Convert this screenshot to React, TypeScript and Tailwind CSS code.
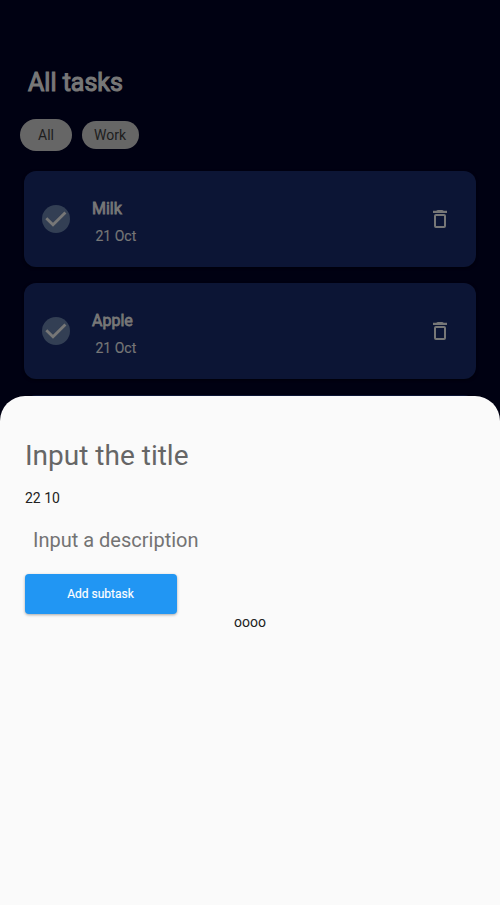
const tasks = [
  { title: "Milk", date: "21 Oct" },
  { title: "Apple", date: "21 Oct" },
  { title: "", date: "" },
];

function CheckMark() {
  return (
    <div className="flex size-7 items-center justify-center rounded-full bg-[#333f54]">
      <svg width="28" height="28" viewBox="0 0 28 28" fill="none">
        <path d="M4.3 13.2 11 19.8 23.4 7.4" stroke="#777777" strokeWidth="2.8" />
      </svg>
    </div>
  );
}

function TrashIcon() {
  return (
    <svg width="24" height="24" viewBox="0 0 24 24" fill="none">
      <path d="M5 3.8h3.2Q9 3 10 3h4q1 0 1.8.8H19V6H5z" fill="#777777" />
      <rect x="7" y="8" width="10" height="12" rx="1" stroke="#777777" strokeWidth="2" />
    </svg>
  );
}

function TaskCard({ title, date }: { title: string; date: string }) {
  return (
    <div className="flex h-24 shrink-0 items-center rounded-xl bg-[#0c1535] pl-[18px] pr-6 text-[#777777] shadow-[0_1px_3px_#00000080]">
      <CheckMark />
      <div className="ml-[22px] grow pt-[7px]">
        <div className="h-[27px] text-base leading-6 [-webkit-text-stroke:0.8px_#777777]">{title}</div>
        <div className="pl-[3.5px] text-sm leading-6 [-webkit-text-stroke:0.15px_#777777]">{date}</div>
      </div>
      <TrashIcon />
    </div>
  );
}

export default function App() {
  return (
    <div className="relative h-[905px] w-[500px] overflow-hidden bg-[#000112] font-['Roboto',sans-serif]">
      <main className="flex h-full flex-col pt-[65px]">
        <h1 className="ml-7 h-9 text-[25px] leading-9 text-[#777777] [-webkit-text-stroke:1.1px_#777777]">All tasks</h1>
        <div className="mt-[18px] ml-5 flex items-center gap-2.5 text-sm text-[#1d1d1d]">
          <div className="flex h-8 w-[52px] items-center justify-center rounded-full bg-[#666666]">All</div>
          <div className="flex h-7 w-[57px] items-center justify-center rounded-full bg-[#666666] pr-px">Work</div>
        </div>
        <div className="mt-5 flex flex-col gap-4 px-6">
          {tasks.map((task, i) => (
            <TaskCard key={i} title={task.title} date={task.date} />
          ))}
        </div>
      </main>
      <section className="absolute inset-x-0 top-[396px] bottom-0 flex flex-col rounded-t-[25px] bg-[#fafafa] px-[25px] pt-10">
        <div className="h-10 text-[28px] leading-10 text-[#666666]">Input the title</div>
        <div className="mt-3 text-sm leading-5 text-[#212121]">22 10</div>
        <div className="mt-[18px] pl-2 text-xl leading-7 text-[#737373]">Input a description</div>
        <button className="mt-5 h-10 w-[152px] rounded bg-[#2196f3] pr-px text-xs font-normal text-white shadow-[0_1px_3px_#00000055] [-webkit-text-stroke:0.15px_#ffffff]">
          Add subtask
        </button>
        <div className="-mt-0.5 text-center text-sm leading-5 text-[#212121]">oooo</div>
      </section>
    </div>
  );
}
